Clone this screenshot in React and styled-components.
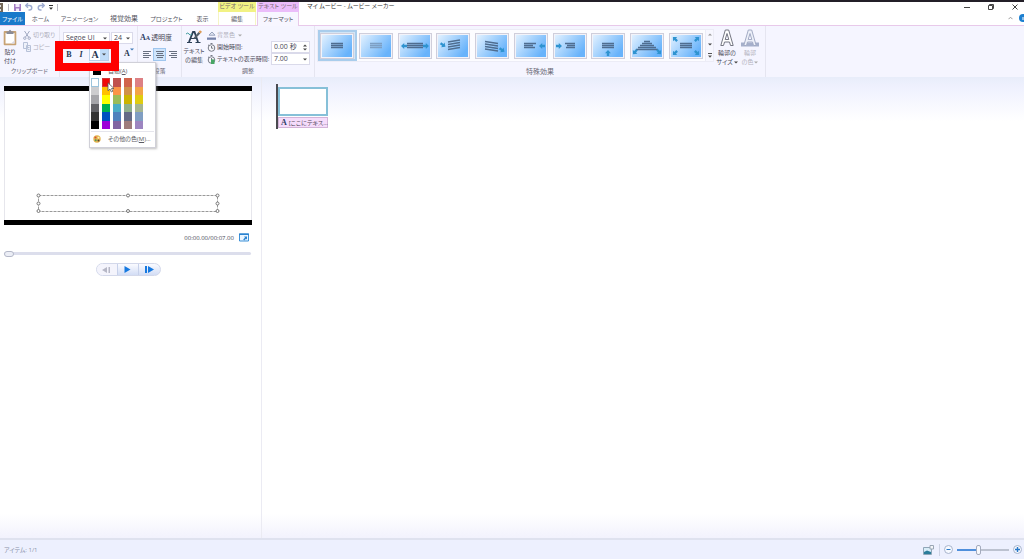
import React, { useState } from 'react';
import styled, { createGlobalStyle, css } from 'styled-components';

const GlobalStyle = createGlobalStyle`
  * {
    box-sizing: border-box;
  }

  body {
    margin: 0;
    background: #fff;
    color: #4a4a58;
    font-family: "Open Sans", "Noto Sans CJK JP", sans-serif;
    font-size: 6px;
    line-height: 8px;
    font-feature-settings: "palt";
  }

  button, input, select {
    margin: 0;
    padding: 0;
    border: 0;
    background: none;
    color: inherit;
    font: inherit;
    font-feature-settings: inherit;
    border-radius: 0;
    min-width: 0;
  }

  svg {
    display: block;
    flex: none;
  }
`;

const Window = styled.div`
  min-height: 100vh;
  display: flex;
  flex-direction: column;
  border-top: 2px solid #231f28;
  white-space: nowrap;
`;

/* Title bar and tabs */

const Header = styled.header`
  display: flex;
  height: 24px;
  border-bottom: 1px solid #e8c9ea;
`;

const HeaderLeft = styled.div`
  flex: 0 0 218px;
`;

const QuickAccess = styled.div`
  display: flex;
  align-items: center;
  gap: 4px;
  height: 10px;
`;

const QuickButton = styled.button`
  display: flex;
`;

const Bar = styled.span`
  width: 1px;
  height: 7px;
  margin-right: 1px;
  background: #b9b9c4;
`;

const Tabs = styled.nav`
  display: flex;
  height: 13px;
`;

const Tab = styled.button`
  flex: 0 0 ${props => props.$width}px;
  font-size: ${props => (props.$wide ? 7 : 6)}px;
  text-align: center;
  height: 13px;
  color: #55555f;
`;

const FileTab = styled(Tab)`
  background: #1979ca;
  color: #fff;
`;

const ContextGroup = styled.div`
  flex: 0 0 ${props => props.$width}px;
  min-width: 0;
  margin-right: 1px;
  text-align: center;
`;

const ContextTitle = styled.div`
  height: 10px;
  line-height: 8px;
  color: #77656f;
  background: ${props => props.$color};
`;

const ContextTab = styled.button`
  display: block;
  width: 100%;
  height: ${props => (props.$active ? 14 : 13)}px;
  color: #55555f;
  border: solid ${props => props.$edge};
  border-width: 0 1px;
  background: ${props => (props.$active ? '#f7f6ff' : '#fff')};
`;

const Caption = styled.div`
  flex: 1;
  display: flex;
  align-items: flex-start;
  padding: 0 0 0 7px;
  color: #333;
`;

const WindowTools = styled.div`
  margin-left: auto;
  display: grid;
  grid-template-columns: 18px 30px 18px;
  grid-template-rows: 9px 13px;
  justify-items: center;
  align-items: center;
`;

const WindowButton = styled.button`
  display: flex;
`;

const CornerTools = styled.div`
  grid-column: 3;
  justify-self: end;
  display: flex;
  align-items: center;
  gap: 6px;
`;

/* Ribbon */

const Ribbon = styled.div`
  display: flex;
  height: 51px;
  background: #f5f5ff;
`;

const Group = styled.section`
  flex: 0 0 ${props => props.$width}px;
  display: flex;
  flex-direction: column;
  border-right: 1px solid #e5e5f0;
`;

const GroupBody = styled.div`
  flex: 1;
  display: flex;
  align-items: flex-start;
  gap: ${props => props.$gap || 0}px;
  padding: ${props => props.$top || 3}px 2px 0 ${props => props.$left || 2}px;
`;

const GroupLabel = styled.div`
  height: 10px;
  font-size: ${props => (props.$wide ? 7 : 6)}px;
  line-height: 9px;
  text-align: center;
  color: #6b6b78;
`;

const BigButton = styled.button`
  display: flex;
  flex-direction: column;
  align-items: center;
  gap: 2px;
  flex: 0 0 ${props => props.$width}px;
  line-height: 9px;
  color: ${props => (props.$dim ? '#b4b4c0' : '#4a4a58')};
`;

const Stack = styled.div`
  display: flex;
  flex-direction: column;
  gap: ${props => props.$gap || 0}px;
`;

const Line = styled.div`
  display: flex;
  align-items: center;
  gap: ${props => props.$gap || 0}px;
  height: 12px;
`;

const SmallButton = styled.button`
  display: flex;
  align-items: center;
  gap: ${props => props.$gap || 2}px;
  height: 12px;
  font-size: ${props => (props.$wide ? 7 : 6)}px;
  color: ${props => (props.$dim ? '#b0b0bc' : '#4a4a58')};
`;

const Field = styled.span`
  display: flex;
  align-items: center;
  width: ${props => props.$width}px;
  height: 12px;
  padding: 0 2px;
  border: 1px solid #dadaea;
  background: #fff;
  font-size: 7px;

  input, select {
    flex: 1;
    width: 0;
    appearance: none;
    outline: 0;
  }
`;

const FormatRow = styled.div`
  position: relative;
  display: flex;
  align-items: center;
  height: 13px;
`;

const FormatButton = styled.button`
  width: 12px;
  height: 13px;
  font: 700 8px/12px "Liberation Serif", serif;
  color: #27364f;
  font-style: ${props => (props.$italic ? 'italic' : 'normal')};
`;

const ColorButton = styled.button`
  display: flex;
  width: 20px;
  height: 13px;
  margin-left: 2px;
  border: 1px solid #b9cfe8;
  background: #fff;
  font: 700 10px/11px "Liberation Serif", serif;
  color: #27364f;
`;

const ColorLetter = styled.span`
  flex: 1;
`;

const ColorDrop = styled.span`
  display: flex;
  align-items: center;
  justify-content: center;
  width: 8px;
  height: 11px;
  background: #c0dcf8;
`;

const GrowButton = styled(FormatButton)`
  display: flex;
  justify-content: center;
  margin-left: 14px;
`;

const Highlight = styled.div`
  position: absolute;
  z-index: 3;
  left: -8px;
  top: -7px;
  width: 64px;
  height: 30px;
  border: 8px solid #fe0000;
  pointer-events: none;
`;

const ColorMenu = styled.div`
  position: absolute;
  z-index: 2;
  left: 26px;
  top: 14px;
  width: 67px;
  border: 1px solid #d0d0d8;
  background: #fff;
  box-shadow: 1px 1px 2px #8888;
  padding: 1px;
`;

const MenuItem = styled.button`
  display: flex;
  align-items: center;
  gap: 7px;
  width: 100%;
  height: 13px;
  padding-left: 2px;
  color: #5a5a62;
`;

const AutoSwatch = styled.span`
  width: 8px;
  height: 8px;
  background: #000;
`;

const Palette = styled.div`
  display: grid;
  grid-template-columns: repeat(5, 8px);
  grid-auto-flow: column;
  grid-template-rows: repeat(6, 1fr);
  column-gap: 3px;
  height: 51px;
  margin: 1px 0 2px;
`;

const Swatch = styled.button`
  position: relative;
  background: ${props => props.$color};
  ${props => props.$current && css`
    border: 1px solid #9cc4dc;
  `}
  ${props => props.$hover && css`
    border: 1px solid #d03838;
  `}
`;

const Pointer = styled.svg`
  position: absolute;
  z-index: 4;
  left: 4px;
  top: 3px;
`;

const MoreColors = styled(MenuItem)`
  height: 15px;
  border-top: 1px solid #e5e5ec;
`;

const AlignButton = styled.button`
  display: flex;
  align-items: center;
  justify-content: center;
  width: 13px;
  height: 13px;
  border: 1px solid ${props => (props.$active ? '#9fc6ee' : 'transparent')};
  background: ${props => (props.$active ? '#cfe4fb' : 'none')};
`;

const TimeGrid = styled.div`
  display: grid;
  grid-template-columns: 8px 52px 39px;
  grid-auto-rows: 12px;
  align-items: center;
  column-gap: 2px;
`;

const Dim = styled.button`
  display: flex;
  align-items: center;
  gap: 3px;
  color: #b0b0bc;
`;

const Gallery = styled.div`
  display: flex;
  width: 397px;
  height: 33px;
  background: #fcfcff;
  border: 1px solid #ececf6;
`;

const GalleryItems = styled.div`
  flex: 1;
  display: flex;
`;

const GalleryItem = styled.button`
  flex: 1;
  display: flex;
  align-items: center;
  justify-content: center;
  border: 2px solid ${props => (props.$active ? '#a9cdec' : 'transparent')};
  background: ${props => (props.$active ? '#d2e5f6' : 'none')};
`;

const GalleryScroll = styled.div`
  width: 8px;
  display: flex;
  flex-direction: column;
  align-items: center;
  justify-content: space-around;
  border-left: 1px solid #ececf6;
  background: #f7f7ff;
`;

const CaretLine = styled.span`
  display: flex;
  align-items: center;
  justify-content: center;
  gap: 1px;
`;

/* Workspace */

const Workspace = styled.main`
  flex: 1;
  display: flex;
  background: linear-gradient(#e8edfa 0, #eff1fe 10px, #fff 44px, #fff calc(100% - 24px), #f2f2fd 100%);
`;

const Player = styled.section`
  flex: 0 0 261px;
  padding: 9px 9px 0 4px;
  border-right: 1px solid #ebebf3;
`;

const Screen = styled.div`
  display: flex;
  flex-direction: column;
  justify-content: flex-end;
  height: 139px;
  padding: 0 32px 7px;
  border: solid #000;
  border-width: 5px 0;
  background: #fff;
  box-shadow: inset 1px 0 #e6e6ec, inset -1px 0 #e6e6ec;
`;

const TextFrame = styled.svg`
  width: 184px;
  height: 20px;
  align-self: center;
`;

const TimeRow = styled.div`
  display: flex;
  align-items: center;
  justify-content: flex-end;
  gap: 5px;
  height: 25px;
  padding-right: 3px;
`;

const Seek = styled.input.attrs({ type: 'range' })`
  display: block;
  appearance: none;
  width: 100%;
  height: 6px;
  padding-right: 1px;

  &::-webkit-slider-runnable-track {
    height: 3px;
    background: #dcdeec;
    border-radius: 2px;
  }

  &::-webkit-slider-thumb {
    appearance: none;
    width: 10px;
    height: 6px;
    margin-top: -1px;
    border: 1px solid #b4b8c8;
    border-radius: 4px;
    background: #eceef6;
  }
`;

const Transport = styled.div`
  display: flex;
  width: 65px;
  height: 13px;
  margin: 7px auto 0;
  border: 1px solid #d3d8ea;
  border-radius: 7px;
  overflow: hidden;
  background: linear-gradient(#fafbff, #d3ddf5);
`;

const TransportButton = styled.button`
  flex: 1;
  display: flex;
  align-items: center;
  justify-content: center;
  background: ${props => (props.disabled ? '#f4f4fc' : 'none')};

  & + & {
    border-left: 1px solid #c7d1ea;
  }
`;

const Storyboard = styled.section`
  flex: 1;
  padding: 7px 14px;
`;

const Clip = styled.div`
  display: flex;
  flex-direction: column;
  gap: 1px;
  width: 52px;
  height: 45px;
  padding-top: 3px;
  border-left: 2px solid #4a4a50;
`;

const ClipImage = styled.button`
  height: 29px;
  border: 2px solid #86c0d8;
  background: #fff;
`;

const ClipText = styled.button`
  display: flex;
  align-items: center;
  gap: 2px;
  height: 11px;
  padding-left: 2px;
  border: 1px solid #d3b4d8;
  background: #f6dcfb;
  color: #544a5c;
`;

const SerifA = styled.b`
  font: 700 8px/9px "Liberation Serif", serif;
  color: #2b3d66;

  small {
    font-size: 6px;
  }
`;

const Status = styled.footer`
  display: flex;
  align-items: center;
  height: 21px;
  padding: 0 2px 0 4px;
  border-top: 2px solid #dfe2ef;
  background: #edf0fe;
  color: #8b93ab;
`;

const ZoomTools = styled.div`
  display: flex;
  align-items: center;
  gap: 4px;
  margin-left: auto;
`;

const ZoomButton = styled.button`
  display: flex;
`;

const Divider = styled.span`
  width: 1px;
  height: 12px;
  margin-left: 1px;
  background: #cdd3e4;
`;

const ZoomSlider = styled.input.attrs({ type: 'range' })`
  appearance: none;
  width: 52px;
  height: 10px;

  &::-webkit-slider-runnable-track {
    height: 2px;
    background: linear-gradient(90deg, #4f8fdc 40%, #bcc2d0 40%);
  }

  &::-webkit-slider-thumb {
    appearance: none;
    width: 5px;
    height: 10px;
    margin-top: -4px;
    border: 1px solid #a4abbd;
    border-radius: 2px;
    background: #f8f9fd;
  }
`;

const Caret = ({ fill = '#444', up }) => (
  <svg width="4" height="3" viewBox="0 0 4 3">
    <path d={up ? 'M0 2.5h4L2 .5z' : 'M0 .5h4L2 2.5z'} fill={fill} />
  </svg>
);

const Undo = ({ flip }) => (
  <svg width="8" height="8" viewBox="0 0 8 8">
    <g transform={flip ? 'translate(8 0) scale(-1 1)' : undefined} fill="none" stroke="#9eabd0" strokeWidth="1.5">
      <path d="M1.500 2.500h3a2 2 0 0 1 0 4.500H3.500" />
      <path d="M3 .3L.8 2.500 3 4.700" />
    </g>
  </svg>
);

const ClipboardIcon = () => (
  <svg width="14" height="17" viewBox="0 0 14 17">
    <rect x=".7" y="2" width="12.6" height="14.3" rx="1" fill="#c8a374" />
    <rect x="2.5" y="4" width="9" height="10.5" fill="#fff" />
    <path d="M3.500 2.500h2Q7-.8 8.500 2.500h2v2.500h-7z" fill="#8a8b96" />
    <path d="M8 14.500l3.500-3v3z" fill="#d9d9e6" />
  </svg>
);

const ScissorsIcon = () => (
  <svg width="8" height="9" viewBox="0 0 8 9" fill="none" stroke="#a2aac2">
    <path d="M1.500 0l4 6M6.500 0l-4 6" />
    <circle cx="1.8" cy="7.2" r="1.2" />
    <circle cx="6.2" cy="7.2" r="1.2" />
  </svg>
);

const CopyIcon = () => (
  <svg width="8" height="10" viewBox="0 0 8 10" fill="#eef1fa" stroke="#b7c1d8">
    <path d="M.5.5h4v6h-4zM3.500 3.500h4v6h-4z" />
    <path d="M4.500 5.500h2M4.500 7.500h2" />
  </svg>
);

const EditTextIcon = () => (
  <svg width="16" height="16" viewBox="0 0 16 16">
    <path d="M3 13L7 3l1.500 0L12 13" fill="none" stroke="#2c4057" strokeWidth="1.800" />
    <path d="M4.500 9.500h6M1 13.500h5M9.500 13.500h5" stroke="#2c4057" strokeWidth="1.200" />
    <path d="M7.500 9l5-6 1.800 1.500L9 10z" fill="#56616b" />
    <path d="M12.500 3L14 1.200l2 1.600-1.500 1.700z" fill="#dc9a55" />
    <path d="M0 5q2-2 3 0t3 0" fill="none" stroke="#3e9a9c" />
  </svg>
);

const FillIcon = () => (
  <svg width="9" height="9" viewBox="0 0 9 9">
    <path d="M2 4l3-3 3 3.200H2z" fill="#e4e8f4" stroke="#98a3bd" />
    <path d="M0 6.500h9v2.300H0z" fill="#7683aa" />
  </svg>
);

const ClockIcon = ({ green }) => (
  <svg width="9" height="9" viewBox="0 0 9 9">
    <circle cx="4.5" cy="5" r="3.3" fill="#f8f8fc" stroke="#777b86" />
    <path d="M3.500.5h2M1 1.800l1 .8M4.500 3v2.200h1.700" stroke="#777b86" fill="none" />
    {green && <path d="M4 4.500h3.500V9H4z" fill="#48a765" />}
  </svg>
);

const AlignIcon = ({ kind }) => {
  const x = { left: 0, center: 1, right: 2 }[kind];
  return (
    <svg width="8" height="7" viewBox="0 0 8 7" stroke="#687080">
      <path d={`M0 .5h8M${x} 2.500h6M0 4.500h8M${x} 6.500h6`} />
    </svg>
  );
};

const OutlineA = ({ color }) => (
  <svg width="18" height="18" viewBox="0 0 18 18">
    {color && <path d="M0 13.500h18v4H0z" fill="#a5afcb" />}
    <path
      d="M2.800 16.500L7.300 1h3.400l4.500 15.500h-2.700l-1-3.500H6.500l-1 3.500zM7.200 10.500h3.600L9 4.500z"
      fill={color ? '#edf0f9' : '#fff'}
      stroke={color ? '#a3abc5' : '#747682'}
    />
  </svg>
);

const Arrow = ({ x, y, turn = 0 }) => (
  <path
    d="M-3-1.200H-.2V-3L3 0 -.2 3V1.200H-3z"
    fill="#2f93d0"
    transform={`translate(${x} ${y}) rotate(${turn})`}
  />
);

const plain = 'M11 10.500h12M11 12.500h12M11 14.500h12';

const effects = [
  { name: 'なし', lines: plain },
  { name: 'フェード', lines: plain, soft: true },
  { name: '伸縮', lines: 'M9 10.500h16M9 12.500h16M9 14.500h16', arrows: [[6, 13, 180], [28, 13, 0]] },
  { name: '左上から', lines: 'M12 9l12-2M12 11.500l12-2M12 14l12-2M12 16.500l12-2', arrows: [[7, 12, 35]] },
  { name: '右下へ', lines: 'M10 8.500l13 2M10 11l13 2M10 13.500l13 2M10 16l13 2', arrows: [[27, 17, 35]] },
  { name: '右から', lines: 'M10 10.500h12M10 12.500h9M10 14.500h11', arrows: [[28, 13, 180]] },
  { name: '左から', lines: 'M12 10.500h10M14 12.500h8M13 14.500h9', arrows: [[6, 13, 0]] },
  { name: '下から', lines: plain, arrows: [[17, 20, -90]] },
  { name: 'スクロール', lines: 'M14 8.500h6M12 10.500h10M10 12.500h14M8 14.500h18M6 16.500h22', arrows: [[5, 19, 130], [29, 19, 50]] },
  { name: '拡大', lines: plain, arrows: [[6, 6, 225], [28, 6, -45], [6, 20, 135], [28, 20, 45]] },
];

const EffectThumb = ({ effect }) => (
  <svg width="34" height="26" viewBox="0 0 34 26">
    <defs>
      <linearGradient id="sky" x1="0" y1="0" x2="1" y2=".6">
        <stop offset="0" stopColor="#e2f1ff" />
        <stop offset=".5" stopColor="#a5d2fd" />
        <stop offset="1" stopColor="#68b3fb" />
      </linearGradient>
    </defs>
    <rect x=".5" y=".5" width="33" height="25" fill="#f3f3f9" stroke="#cfcedb" />
    <rect x="2" y="2" width="30" height="22" fill="url(#sky)" />
    <path d={effect.lines} stroke={effect.soft ? '#7d9fc4' : '#4f6d90'} strokeWidth="1.3" />
    {(effect.arrows || []).map(([x, y, turn]) => (
      <Arrow key={`${x}-${y}`} x={x} y={y} turn={turn} />
    ))}
  </svg>
);

const palette = [
  ['#ffffff', '#cdcdcf', '#a6a6aa', '#626266', '#333333', '#000000'],
  ['#f00808', '#ffc000', '#ffff00', '#00b050', '#0050c0', '#9d00d8'],
  ['#c0504d', '#fb9446', '#9bbb59', '#4bacc6', '#4f81bd', '#8064a2'],
  ['#d1634a', '#d09049', '#ccb400', '#8fb08c', '#646b86', '#9e7c7c'],
  ['#dd8084', '#f3a447', '#e0cc10', '#a5b592', '#809ec2', '#9c85c0'],
];

const Handle = ({ x, y }) => <circle cx={x} cy={y} r="1.5" fill="#fff" stroke="#777" />;

const TitleArea = () => (
  <Header>
    <HeaderLeft>
      <QuickAccess>
        <svg width="4" height="9" viewBox="0 0 4 9"><path d="M0 0h3v9H0z" fill="#736759" /><path d="M0 2h1v2H0zM0 6h1v2H0z" fill="#ddd" /></svg>
        <Bar />
        <QuickButton aria-label="保存">
          <svg width="7" height="7" viewBox="0 0 7 7"><path d="M0 0h7v7H0z" fill="#a47dc4" /><path d="M1.500 0h4v3h-4zM2 4.500h3V7H2z" fill="#f2eafa" /></svg>
        </QuickButton>
        <QuickButton aria-label="元に戻す"><Undo /></QuickButton>
        <QuickButton aria-label="やり直し"><Undo flip /></QuickButton>
        <QuickButton aria-label="カスタマイズ">
          <svg width="4" height="5" viewBox="0 0 4 5"><path d="M0 0h4v1H0zM0 2.500h4L2 4.800z" fill="#333" /></svg>
        </QuickButton>
        <Bar />
      </QuickAccess>
      <Tabs>
        <FileTab $width={25}>ファイル</FileTab>
        <Tab $width={31}>ホーム</Tab>
        <Tab $width={47}>アニメーション</Tab>
        <Tab $width={42} $wide>視覚効果</Tab>
        <Tab $width={43}>プロジェクト</Tab>
        <Tab $width={29}>表示</Tab>
      </Tabs>
    </HeaderLeft>
    <ContextGroup $width={38}>
      <ContextTitle $color="#f2f284">ビデオ ツール</ContextTitle>
      <ContextTab $edge="#f5f5c4">編集</ContextTab>
    </ContextGroup>
    <ContextGroup $width={42}>
      <ContextTitle $color="#ebbdfa">テキスト ツール</ContextTitle>
      <ContextTab $active $edge="#e8c9ea">フォーマット</ContextTab>
    </ContextGroup>
    <Caption>
      マイ ムービー - ムービー メーカー
      <WindowTools>
        <WindowButton aria-label="最小化">
          <svg width="6" height="6" viewBox="0 0 6 6"><path d="M0 3.500h6" stroke="#444" /></svg>
        </WindowButton>
        <WindowButton aria-label="元のサイズに戻す">
          <svg width="6" height="6" viewBox="0 0 6 6" fill="none" stroke="#444"><path d="M.5 1.500h4v4h-4zM1.500 1V.5h4v4H5" /></svg>
        </WindowButton>
        <WindowButton aria-label="閉じる">
          <svg width="6" height="6" viewBox="0 0 6 6"><path d="M.5.5l5 5M5.500.5l-5 5" stroke="#444" /></svg>
        </WindowButton>
        <CornerTools>
          <WindowButton aria-label="リボンを折りたたむ">
            <svg width="5" height="4" viewBox="0 0 5 4"><path d="M.5 3.200l2-2 2 2" fill="none" stroke="#999" /></svg>
          </WindowButton>
          <WindowButton aria-label="ヘルプ">
            <svg width="5" height="8" viewBox="0 0 5 8"><circle cx="4" cy="4" r="4" fill="#1c7fd0" /><path d="M4 3v3" stroke="#fff" /></svg>
          </WindowButton>
        </CornerTools>
      </WindowTools>
    </Caption>
  </Header>
);

const FontColorMenu = () => (
  <ColorMenu>
    <MenuItem>
      <AutoSwatch />
      <span>自動(<u>A</u>)</span>
    </MenuItem>
    <Palette>
      {palette.map((column, c) => column.map((color, r) => (
        <Swatch key={color} $color={color} $current={!c && !r} $hover={c === 1 && !r} aria-label={color}>
          {c === 1 && !r && (
            <Pointer width="8" height="11" viewBox="0 0 8 11">
              <path d="M1 .8v8l2-1.800 1.300 3 1.500-.7L4.500 6.500H7z" fill="#fff" stroke="#555" strokeWidth=".8" />
            </Pointer>
          )}
        </Swatch>
      )))}
    </Palette>
    <MoreColors>
      <svg width="8" height="8" viewBox="0 0 8 8">
        <circle cx="4" cy="4" r="3.7" fill="#e6b450" />
        <circle cx="2.5" cy="2.5" r="1" fill="#d2503c" />
        <circle cx="5.5" cy="2.8" r="1" fill="#fff3b0" />
        <circle cx="2.7" cy="5.3" r="1" fill="#4d9c58" />
        <circle cx="5.5" cy="5.5" r="1" fill="#544236" />
      </svg>
      <span>その他の色(<u>M</u>)...</span>
    </MoreColors>
  </ColorMenu>
);

const OutlineText = ({ first, second, fill }) => (
  <span>
    {first}
    <CaretLine>{second}<Caret fill={fill} /></CaretLine>
  </span>
);

const RibbonBar = () => {
  const [start, setStart] = useState('0.00 秒');

  return (
    <Ribbon>
      <Group $width={60}>
        <GroupBody $left={3} $gap={6}>
          <BigButton $width={14}>
            <ClipboardIcon />
            <span>貼り<br />付け</span>
          </BigButton>
          <Stack>
            <SmallButton $dim><ScissorsIcon />切り取り</SmallButton>
            <SmallButton $dim><CopyIcon />コピー</SmallButton>
          </Stack>
        </GroupBody>
        <GroupLabel>クリップボード</GroupLabel>
      </Group>
      <Group $width={77}>
        <GroupBody $left={3} $top={6}>
          <Stack $gap={4}>
            <Line $gap={1}>
              <Field $width={47}>
                <select aria-label="フォント"><option>Segoe UI</option></select>
                <Caret />
              </Field>
              <Field $width={22}>
                <select aria-label="フォント サイズ"><option>24</option></select>
                <Caret />
              </Field>
            </Line>
            <FormatRow>
              <FormatButton aria-label="太字">B</FormatButton>
              <FormatButton aria-label="斜体" $italic>I</FormatButton>
              <ColorButton aria-label="テキストの色">
                <ColorLetter>A</ColorLetter>
                <ColorDrop><Caret /></ColorDrop>
              </ColorButton>
              <GrowButton aria-label="フォントの拡大">A<Caret fill="#3c78b8" /></GrowButton>
              <Highlight />
              <FontColorMenu />
            </FormatRow>
          </Stack>
        </GroupBody>
        <GroupLabel>フォント</GroupLabel>
      </Group>
      <Group $width={44}>
        <GroupBody $top={6}>
          <Stack $gap={4}>
            <SmallButton $wide $gap={1}><SerifA>A<small>A</small></SerifA>透明度</SmallButton>
            <Line>
              <AlignButton aria-label="左揃え"><AlignIcon kind="left" /></AlignButton>
              <AlignButton aria-label="中央揃え" $active><AlignIcon kind="center" /></AlignButton>
              <AlignButton aria-label="右揃え"><AlignIcon kind="right" /></AlignButton>
            </Line>
          </Stack>
        </GroupBody>
        <GroupLabel>段落</GroupLabel>
      </Group>
      <Group $width={133}>
        <GroupBody $gap={3}>
          <BigButton $width={20}>
            <EditTextIcon />
            <span>テキスト<br />の編集</span>
          </BigButton>
          <TimeGrid>
            <FillIcon />
            <Dim>背景色 <Caret fill="#aaa" /></Dim>
            <span />
            <ClockIcon />
            <label htmlFor="start">開始時間:</label>
            <Field $width={39}>
              <input id="start" value={start} onChange={e => setStart(e.target.value)} />
              <Stack $gap={1}><Caret up /><Caret /></Stack>
            </Field>
            <ClockIcon green />
            <label htmlFor="length">テキストの表示時間:</label>
            <Field $width={39}>
              <select id="length"><option>7.00</option></select>
              <Caret />
            </Field>
          </TimeGrid>
        </GroupBody>
        <GroupLabel>調整</GroupLabel>
      </Group>
      <Group $width={451}>
        <GroupBody $gap={3}>
          <Gallery>
            <GalleryItems>
              {effects.map((effect, i) => (
                <GalleryItem key={effect.name} $active={i === 0} aria-label={effect.name}>
                  <EffectThumb effect={effect} />
                </GalleryItem>
              ))}
            </GalleryItems>
            <GalleryScroll>
              <Caret up fill="#999" />
              <Caret />
              <svg width="4" height="5" viewBox="0 0 4 5"><path d="M0 0h4v1H0zM0 2.500h4L2 4.800z" fill="#555" /></svg>
            </GalleryScroll>
          </Gallery>
          <BigButton $width={20}>
            <OutlineA />
            <OutlineText first="輪郭の" second="サイズ" />
          </BigButton>
          <BigButton $width={20} $dim>
            <OutlineA color />
            <OutlineText first="輪郭" second="の色" fill="#aaa" />
          </BigButton>
        </GroupBody>
        <GroupLabel $wide>特殊効果</GroupLabel>
      </Group>
    </Ribbon>
  );
};

const PlayerPane = () => (
  <Player>
    <Screen>
      <TextFrame viewBox="0 0 184 20">
        <rect x="2.5" y="2.5" width="179" height="16" fill="none" stroke="#999" strokeDasharray="3 1" />
        {[2.5, 92, 181.5].map(x => (
          <g key={x}>
            <Handle x={x} y={2.5} />
            <Handle x={x} y={18} />
          </g>
        ))}
        <Handle x={2.5} y={10.5} />
        <Handle x={181.5} y={10.5} />
      </TextFrame>
    </Screen>
    <TimeRow>
      <span>00:00.00/00:07.00</span>
      <ZoomButton aria-label="全画面表示">
        <svg width="10" height="9" viewBox="0 0 10 9">
          <path d="M.5 1h9v7h-9z" fill="#eaf5ff" stroke="#3d91d8" />
          <path d="M0 .5h10v1.500H0zM5 3.500h3v3L7 5.700 5.200 7.500l-1-1L6 4.500z" fill="#2c83d0" />
        </svg>
      </ZoomButton>
    </TimeRow>
    <Seek aria-label="再生位置" defaultValue={0} />
    <Transport>
      <TransportButton aria-label="前のフレーム" disabled>
        <svg width="9" height="6" viewBox="0 0 9 6"><path d="M5 0v6L0 3zM6.500 0H8v6H6.500z" fill="#b6b7c6" /></svg>
      </TransportButton>
      <TransportButton aria-label="再生">
        <svg width="7" height="7" viewBox="0 0 7 7"><path d="M.5 0l6 3.500-6 3.500z" fill="#1679e0" /></svg>
      </TransportButton>
      <TransportButton aria-label="次のフレーム">
        <svg width="9" height="7" viewBox="0 0 9 7"><path d="M0 0h2v7H0zM3 0l6 3.500L3 7z" fill="#1679e0" /></svg>
      </TransportButton>
    </Transport>
  </Player>
);

const App = () => (
  <Window>
    <GlobalStyle />
    <TitleArea />
    <RibbonBar />
    <Workspace>
      <PlayerPane />
      <Storyboard>
        <Clip>
          <ClipImage aria-label="クリップ" />
          <ClipText><SerifA>A</SerifA>[ここにテキス...</ClipText>
        </Clip>
      </Storyboard>
    </Workspace>
    <Status>
      アイテム: 1/1
      <ZoomTools>
        <ZoomButton aria-label="サムネイルのサイズ">
          <svg width="11" height="10" viewBox="0 0 11 10">
            <path d="M.5 2.500h8v7h-8z" fill="#d8edf8" stroke="#8fa6b8" />
            <path d="M1 7l3-1.500L8 7v2H1z" fill="#2b7d9a" />
            <path d="M7 .5h3.500V4H7z" fill="#f4f6fa" stroke="#9aa6b4" />
          </svg>
        </ZoomButton>
        <Divider />
        <ZoomButton aria-label="縮小">
          <svg width="9" height="9" viewBox="0 0 9 9"><circle cx="4.5" cy="4.5" r="4" fill="#f6f9ff" stroke="#a9b4cc" /><path d="M2.500 4.500h4" stroke="#2878c8" /></svg>
        </ZoomButton>
        <ZoomSlider aria-label="ズーム" defaultValue={40} />
        <ZoomButton aria-label="拡大">
          <svg width="9" height="9" viewBox="0 0 9 9"><circle cx="4.5" cy="4.5" r="4" fill="#f6f9ff" stroke="#a9b4cc" /><path d="M2 4.500h5M4.500 2v5" stroke="#2878c8" strokeWidth="1.4" /></svg>
        </ZoomButton>
      </ZoomTools>
    </Status>
  </Window>
);

export default App;
